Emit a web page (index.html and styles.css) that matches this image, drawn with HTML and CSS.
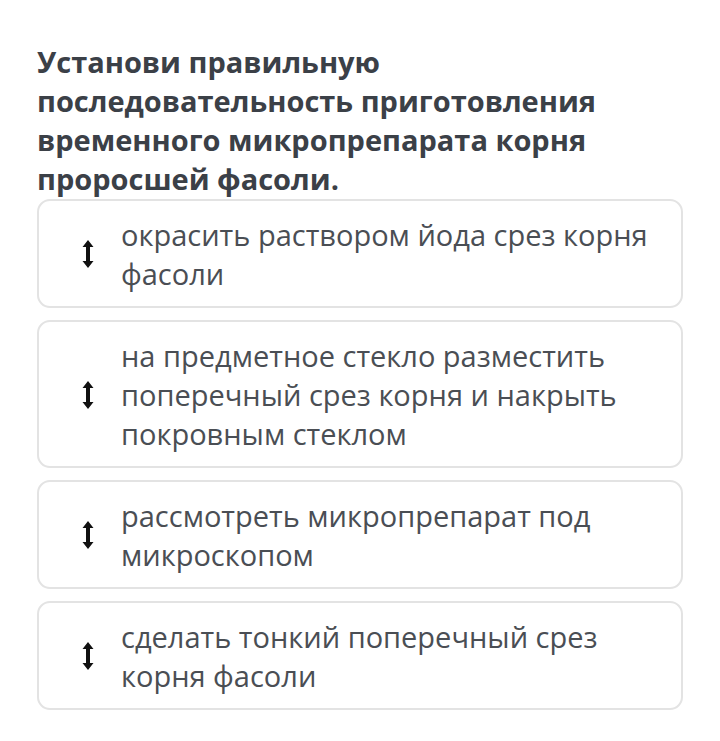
FILE: index.html
```html
<!DOCTYPE html>
<html lang="ru">
<head>
<meta charset="utf-8">
<link rel="stylesheet" href="styles.css">
</head>
<body>
<main class="page">
  <h1 class="question">Установи правильную последовательность приготовления временного микропрепарата корня проросшей фасоли.</h1>
  <ul class="items">
    <li class="item">
      <span class="handle"><svg width="12" height="30" viewBox="0 0 12 30"><path d="M6 1 L11.5 8 H8 V22 H11.5 L6 29 L0.5 22 H4 V8 H0.5 Z" fill="#111"/></svg></span>
      <span class="text">окрасить раствором йода срез корня фасоли</span>
    </li>
    <li class="item">
      <span class="handle"><svg width="12" height="30" viewBox="0 0 12 30"><path d="M6 1 L11.5 8 H8 V22 H11.5 L6 29 L0.5 22 H4 V8 H0.5 Z" fill="#111"/></svg></span>
      <span class="text">на предметное стекло разместить поперечный срез корня и накрыть покровным стеклом</span>
    </li>
    <li class="item">
      <span class="handle"><svg width="12" height="30" viewBox="0 0 12 30"><path d="M6 1 L11.5 8 H8 V22 H11.5 L6 29 L0.5 22 H4 V8 H0.5 Z" fill="#111"/></svg></span>
      <span class="text">рассмотреть микропрепарат под микроскопом</span>
    </li>
    <li class="item">
      <span class="handle"><svg width="12" height="30" viewBox="0 0 12 30"><path d="M6 1 L11.5 8 H8 V22 H11.5 L6 29 L0.5 22 H4 V8 H0.5 Z" fill="#111"/></svg></span>
      <span class="text">сделать тонкий поперечный срез корня фасоли</span>
    </li>
  </ul>
</main>
</body>
</html>
```

FILE: styles.css
```css
html, body {
  margin: 0;
  padding: 0;
  background: #ffffff;
}
.page {
  padding: 42px 37px 0 37px;
  font-family: "Open Sans", "Noto Sans", sans-serif;
}
.question {
  margin: 0;
  font-size: 29px;
  font-weight: 700;
  line-height: 39px;
  color: #3b4047;
  width: 620px;
}
.items {
  list-style: none;
  margin: 1px 0 0 0;
  padding: 0;
  display: flex;
  flex-direction: column;
  gap: 12px;
}
.item {
  display: flex;
  align-items: center;
  border: 2px solid #e3e3e3;
  border-radius: 13px;
  padding: 14px 16px 13px 0;
}
.handle {
  width: 39px;
  flex: 0 0 39px;
  display: flex;
  justify-content: flex-start;
  padding-left: 43px;
}
.handle svg {
  display: block;
}
.text {
  font-size: 29px;
  line-height: 39px;
  color: #4a4e54;
}
```
